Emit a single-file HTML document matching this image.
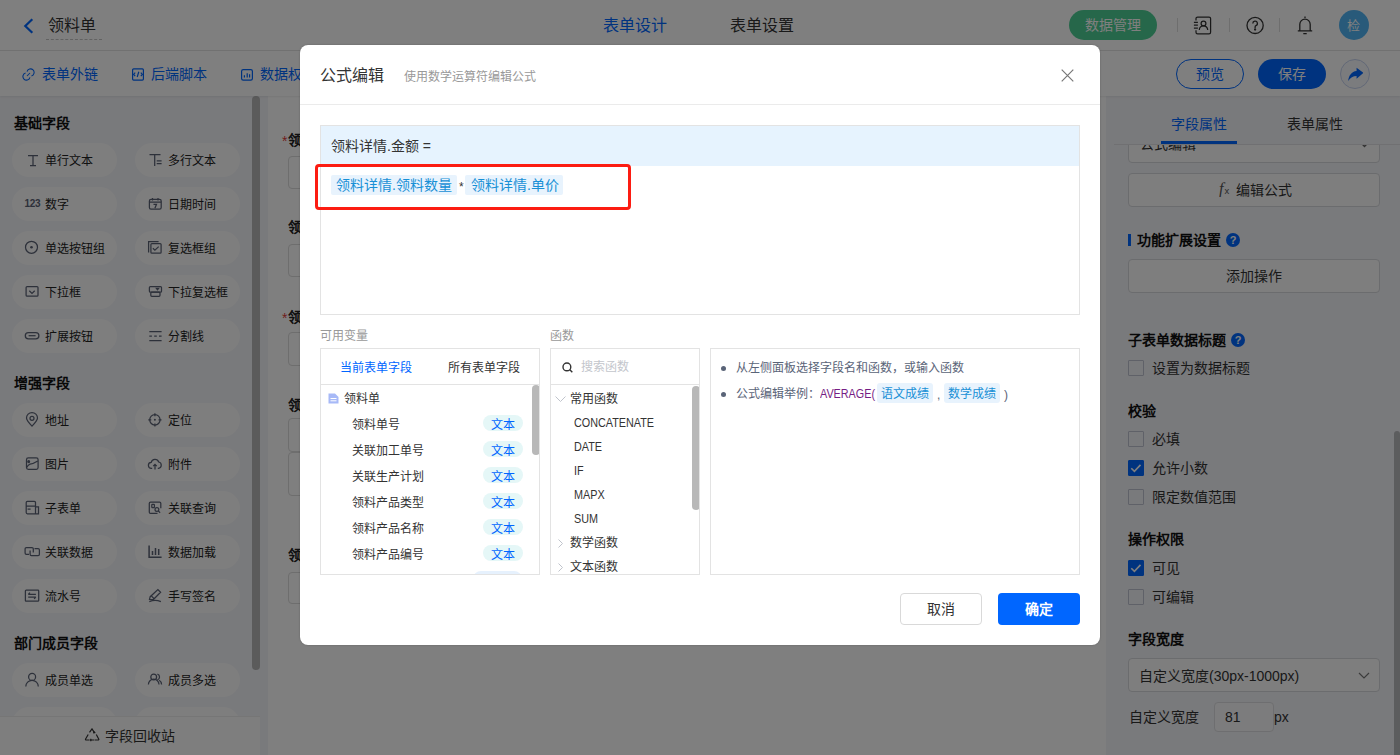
<!DOCTYPE html>
<html lang="zh-CN"><head><meta charset="utf-8"><title>公式编辑</title>
<style>
*{box-sizing:border-box;margin:0;padding:0}
html,body{width:1400px;height:755px;overflow:hidden;background:#fff;font-family:"Liberation Sans",sans-serif;color:#333}
.abs{position:absolute}
.t{position:absolute;white-space:nowrap;line-height:1}
#top{position:absolute;left:0;top:0;width:1400px;height:51px;background:#fff;border-bottom:1px solid #e3e3e3}
#tool{position:absolute;left:0;top:51px;width:1400px;height:45px;background:#fff;box-shadow:0 1px 2px rgba(0,0,0,.07);z-index:2}
#mask{z-index:5}#dlg{z-index:6}
#left{position:absolute;left:0;top:96px;width:268px;height:659px;background:#f3f4f8;overflow:hidden}
#canvas{position:absolute;left:268px;top:96px;width:838px;height:659px;background:#fff;overflow:hidden}
#right{position:absolute;left:1106px;top:96px;width:294px;height:659px;background:#f3f4f8;overflow:hidden}
.pill{position:absolute;width:105px;height:34px;border-radius:17px;background:#fdfdfd}
.h{position:absolute;font-size:14px;font-weight:bold;color:#111;line-height:1;white-space:nowrap}
#mask{position:absolute;left:0;top:0;width:1400px;height:755px;background:rgba(0,0,0,.5)}
#dlg{position:absolute;left:300px;top:45px;width:800px;height:600px;background:#fff;border-radius:8px;box-shadow:0 0 2px rgba(0,0,0,.25)}
.cb{position:absolute;width:16px;height:16px;border:1px solid #bfc3d0;border-radius:1px;background:transparent}
.cb.on{background:#0066ff;border-color:#0066ff}
.btnbox{position:absolute;left:22px;width:252px;border:1px solid #d6d8dd;border-radius:4px;background:#fdfdfd}
</style></head><body>
<div id="top"><svg class="abs" style="left:23px;top:18px" width="11" height="16" viewBox="0 0 11 16"><path d="M9.3 1.3L2.3 8l7 6.7" fill="none" stroke="#0066ff" stroke-width="2.2"/></svg><div class="t" style="left:48px;top:18px;font-size:16px;color:#333">领料单</div><div class="abs" style="left:46px;top:39px;width:56px;border-top:1px dashed #c4c4c4"></div><div class="t" style="left:603px;top:18px;font-size:16px;color:#0066ff">表单设计</div><div class="t" style="left:730px;top:18px;font-size:16px;color:#333">表单设置</div><div class="abs" style="left:1069px;top:10px;width:88px;height:30px;border-radius:15px;background:#4cce94"></div><div class="t" style="left:1085px;top:18px;font-size:14px;color:#fff">数据管理</div><div class="abs" style="left:1177px;top:18px;width:1px;height:14px;background:#ddd"></div><div class="abs" style="left:1229px;top:18px;width:1px;height:14px;background:#ddd"></div><div class="abs" style="left:1279px;top:18px;width:1px;height:14px;background:#ddd"></div><svg class="abs" style="left:1193px;top:16px" width="19" height="19" viewBox="0 0 19 19" fill="none" stroke="#333" stroke-width="1.25"><path d="M3 4.6V2.6a1.6 1.6 0 0 1 1.6-1.6h11.4a1.6 1.6 0 0 1 1.6 1.6v13.6a1.6 1.6 0 0 1-1.6 1.6H4.6A1.6 1.6 0 0 1 3 16.2V14.2M0.9 6.3h4M0.9 9.1h4M0.9 12.1h4"/><circle cx="10.5" cy="7.4" r="2.4"/><path d="M6.3 14a4.2 4.2 0 0 1 8.4 0"/></svg><svg class="abs" style="left:1246px;top:16px" width="19" height="19" viewBox="0 0 19 19" fill="none" stroke="#333" stroke-width="1.3"><circle cx="9.1" cy="9.4" r="8.1"/><path d="M6.8 7.4a2.3 2.3 0 1 1 3.1 2.2c-.6.3-.8.7-.8 1.3v1"/><circle cx="9.1" cy="13.5" r=".5" fill="#333"/></svg><svg class="abs" style="left:1297px;top:16px" width="16" height="19" viewBox="0 0 16 19" fill="none" stroke="#333" stroke-width="1.3"><path d="M8 0.5v1.5M2.8 14.5V8.3A5.2 5.2 0 0 1 13.2 8.3v6.2M0.8 14.8h14.4M6.3 17.6h3.4"/></svg><div class="abs" style="left:1339px;top:10px;width:30px;height:30px;border-radius:15px;background:#50b4f4"></div><div class="t" style="left:1347px;top:19px;font-size:13px;color:#fff">检</div></div>
<div id="tool"><svg class="abs" style="left:22px;top:17px" width="13" height="13" viewBox="0 0 13 13" fill="none" stroke="#0066ff" stroke-width="1.05"><path d="M5.02 3.57A3.6 3.6 0 1 1 9.43 7.98M7.98 9.43A3.6 3.6 0 1 1 3.57 5.02M5 8L8 5"/></svg><div class="t" style="left:42px;top:16px;font-size:14px;color:#0066ff">表单外链</div><svg class="abs" style="left:132px;top:17px" width="12" height="13" viewBox="0 0 12 13" fill="none" stroke="#0066ff" stroke-width="1.2"><rect x="0.6" y="0.9" width="10.8" height="11.2" rx="1"/><path d="M3.2 4.7L1.6 6.4 3.2 8.1M8.8 4.7L10.4 6.4 8.8 8.1M6.8 3.8L5.2 9"/></svg><div class="t" style="left:151px;top:16px;font-size:14px;color:#0066ff">后端脚本</div><svg class="abs" style="left:241px;top:18px" width="12" height="12" viewBox="0 0 12 12" fill="none" stroke="#0066ff" stroke-width="1.2"><rect x="0.6" y="0.6" width="10.8" height="10.6" rx="1.6"/><path d="M3.4 6.2V8.4M6.2 4.2V8.4M8.6 5.2V8.4"/></svg><div class="t" style="left:260px;top:16px;font-size:14px;color:#0066ff">数据权限</div><div class="abs" style="left:1176px;top:8px;width:68px;height:30px;border-radius:15px;border:1px solid #0066ff"></div><div class="t" style="left:1196px;top:16px;font-size:14px;color:#0066ff">预览</div><div class="abs" style="left:1258px;top:8px;width:68px;height:30px;border-radius:15px;background:#0066ff"></div><div class="t" style="left:1278px;top:16px;font-size:14px;color:#fff">保存</div><div class="abs" style="left:1340px;top:8px;width:30px;height:30px;border-radius:15px;border:1px solid #c6d2ee;background:#f6f8fd"></div><svg class="abs" style="left:1348px;top:16px" width="15" height="14" viewBox="0 0 14 13"><path d="M8 0.6L14.4 5.5 8 10.9V8.3C4.6 8.3 2.3 9.8 0.2 13 0.6 7.8 3.4 4.1 8 3.6z" fill="#0066ff"/></svg></div>
<div id="left">
<div style="position:absolute;left:0;top:-96px;width:268px;height:755px"><div class="h" style="left:14px;top:116px">基础字段</div><div class="h" style="left:14px;top:376px">增强字段</div><div class="h" style="left:14px;top:636px">部门成员字段</div><div class="pill" style="left:12px;top:143px"></div><div class="t" style="left:45px;top:155px;font-size:12px;color:#222">单行文本</div><div class="pill" style="left:135px;top:143px"></div><div class="t" style="left:168px;top:155px;font-size:12px;color:#222">多行文本</div><div class="pill" style="left:12px;top:187px"></div><svg class="abs" style="left:24px;top:196px" width="18" height="12"><text x="0.4" y="10.9" style="font-family:'Liberation Sans',sans-serif;font-size:10px;font-weight:bold" fill="#5b6275" letter-spacing="-0.2">123</text></svg><div class="t" style="left:45px;top:199px;font-size:12px;color:#222">数字</div><div class="pill" style="left:135px;top:187px"></div><div class="t" style="left:168px;top:199px;font-size:12px;color:#222">日期时间</div><div class="pill" style="left:12px;top:231px"></div><div class="t" style="left:45px;top:243px;font-size:12px;color:#222">单选按钮组</div><div class="pill" style="left:135px;top:231px"></div><div class="t" style="left:168px;top:243px;font-size:12px;color:#222">复选框组</div><div class="pill" style="left:12px;top:275px"></div><div class="t" style="left:45px;top:287px;font-size:12px;color:#222">下拉框</div><div class="pill" style="left:135px;top:275px"></div><div class="t" style="left:168px;top:287px;font-size:12px;color:#222">下拉复选框</div><div class="pill" style="left:12px;top:319px"></div><div class="t" style="left:45px;top:331px;font-size:12px;color:#222">扩展按钮</div><div class="pill" style="left:135px;top:319px"></div><div class="t" style="left:168px;top:331px;font-size:12px;color:#222">分割线</div><div class="pill" style="left:12px;top:403px"></div><div class="t" style="left:45px;top:415px;font-size:12px;color:#222">地址</div><div class="pill" style="left:135px;top:403px"></div><div class="t" style="left:168px;top:415px;font-size:12px;color:#222">定位</div><div class="pill" style="left:12px;top:447px"></div><div class="t" style="left:45px;top:459px;font-size:12px;color:#222">图片</div><div class="pill" style="left:135px;top:447px"></div><div class="t" style="left:168px;top:459px;font-size:12px;color:#222">附件</div><div class="pill" style="left:12px;top:491px"></div><div class="t" style="left:45px;top:503px;font-size:12px;color:#222">子表单</div><div class="pill" style="left:135px;top:491px"></div><div class="t" style="left:168px;top:503px;font-size:12px;color:#222">关联查询</div><div class="pill" style="left:12px;top:535px"></div><div class="t" style="left:45px;top:547px;font-size:12px;color:#222">关联数据</div><div class="pill" style="left:135px;top:535px"></div><div class="t" style="left:168px;top:547px;font-size:12px;color:#222">数据加载</div><div class="pill" style="left:12px;top:579px"></div><div class="t" style="left:45px;top:591px;font-size:12px;color:#222">流水号</div><div class="pill" style="left:135px;top:579px"></div><div class="t" style="left:168px;top:591px;font-size:12px;color:#222">手写签名</div><div class="pill" style="left:12px;top:663px"></div><div class="t" style="left:45px;top:675px;font-size:12px;color:#222">成员单选</div><div class="pill" style="left:135px;top:663px"></div><div class="t" style="left:168px;top:675px;font-size:12px;color:#222">成员多选</div><div class="pill" style="left:12px;top:707px"></div><div class="t" style="left:45px;top:719px;font-size:12px;color:#222">部门单选</div><div class="pill" style="left:135px;top:707px"></div><div class="t" style="left:168px;top:719px;font-size:12px;color:#222">部门多选</div><svg class="abs" style="left:0;top:0" width="268" height="755" fill="none" stroke="#5b6275" stroke-width="1.25"><g transform="translate(24,153)"><path d="M4 2.5h10M9 2.5v10M6 12.5h6"/></g><g transform="translate(147,153)"><path d="M2.5 1.5h11M7.7 1.5V13M9.7 7.9h4.9M9.7 10.5h4.9"/></g><g transform="translate(147,197)"><rect x="2.4" y="2.4" width="11.8" height="9.8" rx="1.6"/><path d="M2.4 5h11.8M5.5 0.9v2.6M11 0.9v2.6M6.5 7.3h3l-1.6 4"/></g><g transform="translate(24,241)"><circle cx="7.5" cy="6.3" r="6"/><circle cx="7.5" cy="6.3" r="1.3" fill="#5b6275" stroke="none"/></g><g transform="translate(147,241)"><path d="M1.6 11.6V0.6h10"/><rect x="3.9" y="2.6" width="10.2" height="9.6" rx="1"/><path d="M5.9 7.2l2 2 3.8-3.6"/></g><g transform="translate(24,285)"><rect x="2.1" y="1.6" width="11.9" height="9.6" rx="1"/><path d="M5.3 5.8l2.7 2.6 2.7-2.6"/></g><g transform="translate(147,285)"><rect x="2.4" y="1.6" width="12.1" height="5.6" rx="1"/><rect x="3.8" y="7.2" width="9.2" height="4.1" rx="1"/><path d="M9.4 3.4h2.2l-1.1 1.4z" fill="#5b6275"/></g><g transform="translate(24,329)"><rect x="1.3" y="3.6" width="13.6" height="6.2" rx="3.1"/><path d="M4.6 6.7h7"/></g><g transform="translate(147,329)"><path d="M2.3 2.5h12.3M2.3 11.5h12.3M2.3 7.1h2.6M7.2 7.1h2.6M12 7.1h2.6"/></g><g transform="translate(24,413)"><path d="M8 13.1C4.6 9.6 2.5 7.2 2.5 5a5.5 5.5 0 0 1 11 0c0 2.2-2.1 4.6-5.5 8.1z"/><circle cx="8" cy="5.3" r="2"/></g><g transform="translate(147,413)"><circle cx="7.9" cy="6.8" r="5.2"/><circle cx="7.9" cy="6.8" r="1" fill="#5b6275" stroke="none"/><path d="M7.9 0.2v3M7.9 10.4v3M1.3 6.8h3M11.5 6.8h3"/></g><g transform="translate(24,457)"><rect x="2.5" y="0.9" width="11.6" height="11.4" rx="1.8"/><path d="M2.6 10.4C4.2 8 5 7.5 6 7.2 8.7 6.8 10.5 6 13.8 4"/><circle cx="4.7" cy="4.6" r="0.9" fill="#5b6275"/></g><g transform="translate(147,457)"><path d="M5.2 11.3H4.6A3 3 0 0 1 4.2 5.3 3.9 3.9 0 0 1 11.7 5 3.2 3.2 0 0 1 11.5 11.3H10.8M8 12.6V7.3M6.2 9.1L8 7.3l1.8 1.8"/></g><g transform="translate(24,501)"><path d="M11.5 5.9V1.6c0-.7-.5-1.2-1.2-1.2H3.4c-.7 0-1.2.5-1.2 1.2v10c0 .7.5 1.2 1.2 1.2h11.1V5.9h-3z M2.2 5.1h9.3M11.5 5.9v6.9M3.6 8h3"/></g><g transform="translate(147,501)"><path d="M13.8 7.3V2.2c0-.7-.5-1.2-1.2-1.2H3.5c-.7 0-1.2.5-1.2 1.2v9c0 .7.5 1.2 1.2 1.2h7"/><rect x="4.8" y="3.4" width="2.6" height="3.2" rx=".6"/><circle cx="9.9" cy="8.5" r="1.9"/><path d="M11.3 9.9l1.8 1.8"/></g><g transform="translate(24,545)"><path d="M5 9.3H2.4A1.3 1.3 0 0 1 1.1 8V3.8c0-.7.6-1.3 1.3-1.3H8c.7 0 1.3.6 1.3 1.3V7.6"/><path d="M10.5 3.7h3.6c.7 0 1.3.6 1.3 1.3v4.2c0 .7-.6 1.3-1.3 1.3H7.4c-.7 0-1.3-.6-1.3-1.3V5.6"/></g><g transform="translate(147,545)"><path d="M2.1 0.5V12.2h12.5" stroke-width="1.5"/><path d="M5.5 6v4M8.5 3v7M11.7 4v6" stroke-width="1.5"/></g><g transform="translate(24,589)"><rect x="1.4" y="1.1" width="13.3" height="11.1" rx="0.8"/><path d="M4.2 5.4h7.7M6 3.6L4.2 5.4M4.2 8.1h7.7M10.1 9.9l1.8-1.8"/></g><g transform="translate(147,589)"><path d="M2.5 10.3L3.2 7.7 10.9 0.6 13.6 3.3 6.4 10.5z M4.3 6.9l2.6 2.6"/><path d="M2.3 12.6c3.5-1.4 7.6-1.6 11.6 0"/></g><g transform="translate(24,673)"><circle cx="8.1" cy="3.9" r="3.5"/><path d="M1.8 13.5a6.2 6.2 0 0 1 12.5 0"/></g><g transform="translate(147,673)"><circle cx="6.7" cy="4" r="2.9"/><path d="M1.4 11.5a5.3 5.3 0 0 1 10.6 0M10.4 1.2a2.9 2.9 0 0 1 0 5.6M12.2 7.3a5.3 5.3 0 0 1 2.4 4.2"/></g><g transform="translate(24,717)"><circle cx="8.1" cy="3.9" r="3.5"/><path d="M1.8 13.5a6.2 6.2 0 0 1 12.5 0"/></g><g transform="translate(147,717)"><circle cx="6.7" cy="4" r="2.9"/><path d="M1.4 11.5a5.3 5.3 0 0 1 10.6 0M10.4 1.2a2.9 2.9 0 0 1 0 5.6M12.2 7.3a5.3 5.3 0 0 1 2.4 4.2"/></g></svg><div class="abs" style="left:252px;top:96px;width:8px;height:574px;border-radius:4px;background:#b6b6b6"></div><div class="abs" style="left:0;top:716px;width:260px;height:39px;background:#fdfdfd;border-top:1px solid #ececec"></div><svg class="abs" style="left:84px;top:728px" width="16" height="14" viewBox="0 0 16 14" fill="none" stroke="#333" stroke-width="1.2"><path d="M5.5 4.3L8 0.9l2.6 4M12.3 6.5l2.4 4.5c.3.6 0 1-.6 1H11M4.2 6.5L1.6 11c-.3.6 0 1 .6 1H5.5M7 12h3.5"/><path d="M9.6 3.3l1.1 1.2-1.6.3M7.3 10.8L6.4 12l.9 1.2"/></svg><div class="t" style="left:105px;top:729px;font-size:14px;color:#333">字段回收站</div></div>
</div>
<div id="canvas"><div class="t" style="left:14px;top:38px;font-size:14px;color:#e23c39">*</div><div class="t" style="left:20px;top:37px;font-size:14px;font-weight:bold;color:#222">领</div><div class="t" style="left:20px;top:124px;font-size:14px;font-weight:bold;color:#222">领</div><div class="t" style="left:14px;top:215px;font-size:14px;color:#e23c39">*</div><div class="t" style="left:20px;top:214px;font-size:14px;font-weight:bold;color:#222">领</div><div class="t" style="left:20px;top:302px;font-size:14px;font-weight:bold;color:#222">领</div><div class="t" style="left:20px;top:452px;font-size:14px;font-weight:bold;color:#222">领</div><div class="abs" style="left:20px;top:60px;width:200px;height:33px;border:1px solid #dcdcdc;border-radius:4px"></div><div class="abs" style="left:20px;top:148px;width:200px;height:33px;border:1px solid #dcdcdc;border-radius:4px"></div><div class="abs" style="left:20px;top:236px;width:200px;height:34px;border:1px solid #dcdcdc;border-radius:4px"></div><div class="abs" style="left:20px;top:322px;width:200px;height:34px;border:1px solid #dcdcdc;border-radius:4px"></div><div class="abs" style="left:20px;top:356px;width:200px;height:44px;border:1px solid #dcdcdc;border-radius:4px"></div><div class="abs" style="left:20px;top:476px;width:200px;height:32px;border:1px solid #dcdcdc;border-radius:4px"></div></div>
<div id="right"><div class="t" style="left:65px;top:21px;font-size:14px;color:#0066ff">字段属性</div><div class="t" style="left:181px;top:21px;font-size:14px;color:#333">表单属性</div><div class="abs" style="left:55px;top:45px;width:76px;height:3px;background:#0066ff"></div><div class="abs" style="left:8px;top:48px;width:286px;height:1px;background:#e0e1e4"></div><div class="abs" style="left:0;top:49px;width:294px;height:610px;overflow:hidden"><div class="btnbox" style="top:-15px;height:33px"></div><div class="t" style="left:34px;top:-8px;font-size:14px;color:#333">公式编辑</div><svg class="abs" style="left:255px;top:-2px" width="7" height="5" viewBox="0 0 7 5" fill="none" stroke="#666" stroke-width="1.3"><path d="M0.8 0.8l2.7 2.7 2.7-2.7"/></svg><div class="btnbox" style="top:28px;height:34px"></div><svg class="abs" style="left:113px;top:36px" width="18" height="16"><text x="0" y="12.5" style="font-family:Liberation Serif,serif;font-style:italic;font-size:16px" fill="#555">f</text><text x="5.6" y="13" style="font-family:Liberation Sans,sans-serif;font-size:9.5px" fill="#555">x</text></svg><div class="t" style="left:130px;top:38px;font-size:14px;color:#333">编辑公式</div><div class="abs" style="left:22px;top:89px;width:3px;height:12px;background:#0066ff"></div><div class="h" style="left:31px;top:88px">功能扩展设置</div><div class="abs" style="left:120px;top:88px;width:14px;height:14px;border-radius:7px;background:#0066ff;color:#fff;font-size:11px;font-weight:bold;line-height:14px;text-align:center">?</div><div class="btnbox" style="top:114px;height:34px"></div><div class="t" style="left:120px;top:124px;font-size:14px;color:#333">添加操作</div><div class="h" style="left:22px;top:188px">子表单数据标题</div><div class="abs" style="left:125px;top:188px;width:14px;height:14px;border-radius:7px;background:#0066ff;color:#fff;font-size:11px;font-weight:bold;line-height:14px;text-align:center">?</div><div class="cb" style="left:22px;top:215px"></div><div class="t" style="left:46px;top:216px;font-size:14px;color:#333">设置为数据标题</div><div class="h" style="left:22px;top:259px">校验</div><div class="cb" style="left:22px;top:286px"></div><div class="t" style="left:46px;top:287px;font-size:14px;color:#333">必填</div><div class="cb on" style="left:22px;top:315px"></div><svg class="abs" style="left:22px;top:315px" width="16" height="16" viewBox="0 0 16 16" fill="none" stroke="#fff" stroke-width="1.6"><path d="M3.3 8.3l3.1 3.1 6.1-6.5"/></svg><div class="t" style="left:46px;top:316px;font-size:14px;color:#333">允许小数</div><div class="cb" style="left:22px;top:344px"></div><div class="t" style="left:46px;top:345px;font-size:14px;color:#333">限定数值范围</div><div class="h" style="left:22px;top:387px">操作权限</div><div class="cb on" style="left:22px;top:415px"></div><svg class="abs" style="left:22px;top:415px" width="16" height="16" viewBox="0 0 16 16" fill="none" stroke="#fff" stroke-width="1.6"><path d="M3.3 8.3l3.1 3.1 6.1-6.5"/></svg><div class="t" style="left:46px;top:416px;font-size:14px;color:#333">可见</div><div class="cb" style="left:22px;top:444px"></div><div class="t" style="left:46px;top:445px;font-size:14px;color:#333">可编辑</div><div class="h" style="left:22px;top:487px">字段宽度</div><div class="btnbox" style="top:513px;height:34px"></div><div class="t" style="left:33px;top:524px;font-size:14px;color:#333">自定义宽度(30px-1000px)</div><svg class="abs" style="left:252px;top:527px" width="12" height="7" viewBox="0 0 12 7" fill="none" stroke="#777" stroke-width="1.2"><path d="M1 1l5 5 5-5"/></svg><div class="t" style="left:23px;top:565px;font-size:14px;color:#333">自定义宽度</div><div class="abs" style="left:108px;top:557px;width:60px;height:30px;border:1px solid #dcdde0;border-radius:4px;background:#f8f9fb"></div><div class="t" style="left:119px;top:565px;font-size:14px;color:#333">81</div><div class="t" style="left:168px;top:565px;font-size:14px;color:#333">px</div></div><div class="abs" style="left:288px;top:335px;width:6px;height:330px;border-radius:3px;background:#b9babd"></div></div>
<div id="mask"></div>
<div id="dlg"><div class="t" style="left:20px;top:23px;font-size:16px;color:#333">公式编辑</div><div class="t" style="left:104px;top:26px;font-size:12px;color:#999">使用数学运算符编辑公式</div><svg class="abs" style="left:761px;top:24px" width="13" height="13" viewBox="0 0 13 13" fill="none" stroke="#777" stroke-width="1.2"><path d="M0.7 0.7l11.6 11.6M12.3 0.7L0.7 12.3"/></svg><div class="abs" style="left:0;top:59px;width:800px;height:1px;background:#ebebeb"></div><div class="abs" style="left:20px;top:80px;width:760px;height:190px;border:1px solid #e3e3e3"></div><div class="abs" style="left:21px;top:81px;width:758px;height:40px;background:#e6f3fe"></div><div class="t" style="left:31px;top:94px;font-size:14px;color:#333">领料详情.金额 =</div><div class="abs" style="left:15px;top:119px;width:316px;height:46px;border:3px solid #fc1c12;border-radius:4px"></div><div class="abs" style="left:31px;top:130px;width:126px;height:20px;border-radius:2px;background:#e8f3fd"></div><div class="t" style="left:36px;top:133px;font-size:14px;color:#1890d6">领料详情.领料数量</div><div class="t" style="left:159px;top:136px;font-size:12px;color:#333">*</div><div class="abs" style="left:165px;top:130px;width:98px;height:20px;border-radius:2px;background:#e8f3fd"></div><div class="t" style="left:171px;top:133px;font-size:14px;color:#1890d6">领料详情.单价</div><div class="t" style="left:20px;top:285px;font-size:12px;color:#999">可用变量</div><div class="t" style="left:250px;top:285px;font-size:12px;color:#999">函数</div><div class="abs" style="left:20px;top:303px;width:220px;height:227px;border:1px solid #e3e3e3;overflow:hidden"><div class="t" style="left:19px;top:13px;font-size:12px;color:#0066ff">当前表单字段</div><div class="t" style="left:127px;top:13px;font-size:12px;color:#333">所有表单字段</div><div class="abs" style="left:0;top:35px;width:220px;height:1px;background:#e3e3e3"></div><svg class="abs" style="left:7px;top:44px" width="11" height="11" viewBox="0 0 11 11"><path d="M0.5 0.5h6.5l3.5 3.5v6.5H0.5z" fill="#a7b9f7"/><path d="M2.5 5.5h6M2.5 7.8h6" stroke="#fff" stroke-width="1"/></svg><div class="t" style="left:23px;top:44px;font-size:12px;color:#333">领料单</div><div class="t" style="left:31px;top:70px;font-size:12px;color:#333">领料单号</div><div class="abs" style="left:162px;top:66px;width:40px;height:16px;border-radius:8px;background:#e5f7f7"></div><div class="t" style="left:170px;top:70px;font-size:12px;color:#0066ff">文本</div><div class="t" style="left:31px;top:96px;font-size:12px;color:#333">关联加工单号</div><div class="abs" style="left:162px;top:92px;width:40px;height:16px;border-radius:8px;background:#e5f7f7"></div><div class="t" style="left:170px;top:96px;font-size:12px;color:#0066ff">文本</div><div class="t" style="left:31px;top:122px;font-size:12px;color:#333">关联生产计划</div><div class="abs" style="left:162px;top:118px;width:40px;height:16px;border-radius:8px;background:#e5f7f7"></div><div class="t" style="left:170px;top:122px;font-size:12px;color:#0066ff">文本</div><div class="t" style="left:31px;top:148px;font-size:12px;color:#333">领料产品类型</div><div class="abs" style="left:162px;top:144px;width:40px;height:16px;border-radius:8px;background:#e5f7f7"></div><div class="t" style="left:170px;top:148px;font-size:12px;color:#0066ff">文本</div><div class="t" style="left:31px;top:174px;font-size:12px;color:#333">领料产品名称</div><div class="abs" style="left:162px;top:170px;width:40px;height:16px;border-radius:8px;background:#e5f7f7"></div><div class="t" style="left:170px;top:174px;font-size:12px;color:#0066ff">文本</div><div class="t" style="left:31px;top:200px;font-size:12px;color:#333">领料产品编号</div><div class="abs" style="left:162px;top:196px;width:40px;height:16px;border-radius:8px;background:#e5f7f7"></div><div class="t" style="left:170px;top:200px;font-size:12px;color:#0066ff">文本</div><div class="abs" style="left:152px;top:222px;width:49px;height:16px;border-radius:8px;background:#e6f1fd"></div><div class="abs" style="left:211px;top:36px;width:8px;height:70px;border-radius:4px;background:#b8b8b8"></div></div><div class="abs" style="left:250px;top:303px;width:150px;height:227px;border:1px solid #e3e3e3;overflow:hidden"><svg class="abs" style="left:11px;top:13px" width="11" height="11" viewBox="0 0 11 11" fill="none" stroke="#333" stroke-width="1.4"><circle cx="4.9" cy="4.9" r="3.9"/><path d="M7.8 7.8l2.5 2.5"/></svg><div class="t" style="left:30px;top:12px;font-size:12px;color:#c3c6cc">搜索函数</div><div class="abs" style="left:0;top:35px;width:150px;height:1px;background:#e3e3e3"></div><svg class="abs" style="left:4px;top:47px" width="11" height="7" viewBox="0 0 11 7" fill="none" stroke="#c0c4cc" stroke-width="1"><path d="M0.5 0.5l5 5 5-5"/></svg><div class="t" style="left:19px;top:44px;font-size:12px;color:#333">常用函数</div><div class="t" style="left:23px;top:68px;font-size:12px;color:#333;transform:scaleX(0.9);transform-origin:0 0">CONCATENATE</div><div class="t" style="left:23px;top:92px;font-size:12px;color:#333;transform:scaleX(0.9);transform-origin:0 0">DATE</div><div class="t" style="left:23px;top:116px;font-size:12px;color:#333;transform:scaleX(0.9);transform-origin:0 0">IF</div><div class="t" style="left:23px;top:140px;font-size:12px;color:#333;transform:scaleX(0.9);transform-origin:0 0">MAPX</div><div class="t" style="left:23px;top:164px;font-size:12px;color:#333;transform:scaleX(0.9);transform-origin:0 0">SUM</div><svg class="abs" style="left:7px;top:190px" width="5" height="9" viewBox="0 0 5 9" fill="none" stroke="#c0c4cc" stroke-width="1"><path d="M0.5 0.5l4 4-4 4"/></svg><div class="t" style="left:19px;top:188px;font-size:12px;color:#333">数学函数</div><svg class="abs" style="left:7px;top:214px" width="5" height="9" viewBox="0 0 5 9" fill="none" stroke="#c0c4cc" stroke-width="1"><path d="M0.5 0.5l4 4-4 4"/></svg><div class="t" style="left:19px;top:212px;font-size:12px;color:#333">文本函数</div><div class="abs" style="left:141px;top:37px;width:8px;height:124px;border-radius:4px;background:#b8b8b8"></div></div><div class="abs" style="left:410px;top:303px;width:370px;height:227px;border:1px solid #e3e3e3"><div class="abs" style="left:10px;top:17px;width:5px;height:5px;border-radius:3px;background:#5a6478"></div><div class="t" style="left:25px;top:13px;font-size:12px;color:#5a6478">从左侧面板选择字段名和函数，或输入函数</div><div class="abs" style="left:10px;top:43px;width:5px;height:5px;border-radius:3px;background:#5a6478"></div><div class="t" style="left:25px;top:39px;font-size:12px;color:#5a6478">公式编辑举例：</div><div class="t" style="left:109px;top:39px;font-size:12px;color:#761d84;transform:scaleX(0.9);transform-origin:0 0">AVERAGE(</div><div class="abs" style="left:166px;top:34px;width:56px;height:20px;border-radius:3px;background:#e8f3fd"></div><div class="t" style="left:170px;top:39px;font-size:12px;color:#1890d6">语文成绩</div><div class="t" style="left:226px;top:40px;font-size:12px;color:#5a6478">,</div><div class="abs" style="left:233px;top:34px;width:56px;height:20px;border-radius:3px;background:#e8f3fd"></div><div class="t" style="left:237px;top:39px;font-size:12px;color:#1890d6">数学成绩</div><div class="t" style="left:293px;top:40px;font-size:12px;color:#5a6478">)</div></div><div class="abs" style="left:600px;top:548px;width:82px;height:32px;border:1px solid #d9d9d9;border-radius:4px;background:#fff"></div><div class="t" style="left:627px;top:557px;font-size:14px;color:#333">取消</div><div class="abs" style="left:698px;top:548px;width:82px;height:32px;border-radius:4px;background:#0066ff"></div><div class="t" style="left:725px;top:557px;font-size:14px;font-weight:bold;color:#fff">确定</div></div>
</body></html>
